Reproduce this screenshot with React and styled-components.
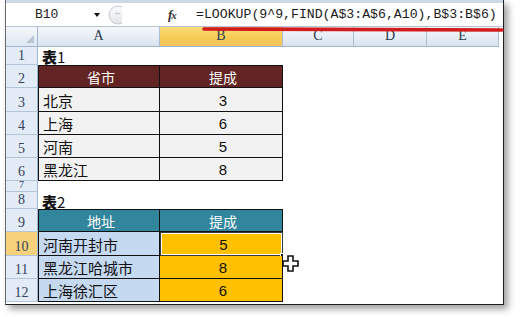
import React from 'react';
import styled, { createGlobalStyle, css } from 'styled-components';

// page reset
const GlobalStyle = createGlobalStyle`
  html, body {
    margin: 0;
    padding: 0;
    background: #ffffff;
  }
  * { box-sizing: border-box; }
`;

const Page = styled.div`
  width: 530px;
  height: 317px;
  overflow: hidden;
  background: #fff;
  padding-left: 5px;
`;

// the excel window with its drop shadow
const Frame = styled.div`
  position: relative;
  width: 499px;
  height: 305px;
  background: #fff;
  border-left: 1px solid #6b6b6b;
  border-right: 1px solid #1e1e1e;
  border-bottom: 1px solid #1e1e1e;
  box-shadow: 4px 4px 7px rgba(0, 0, 0, 0.38);
  display: flex;
  flex-direction: column;
`;

const TopStrip = styled.div`
  height: 3px;
  background: #cdd9e7;
`;

const FormulaBar = styled.div`
  height: 24px;
  display: flex;
  align-items: center;
  background: #fff;
  border-bottom: 1px solid #b5c3d3;
`;

const NameBox = styled.div`
  width: 88px;
  padding-left: 29px;
  font-family: "Liberation Mono", "DejaVu Sans Mono", monospace;
  font-size: 13px;
  color: #222;
`;

const DropArrow = styled.div`
  width: 0;
  height: 0;
  border-left: 3px solid transparent;
  border-right: 3px solid transparent;
  border-top: 4px solid #111;
  margin-top: 1px;
`;

const BallWrap = styled.div`
  margin-left: 8px;
  width: 14px;
  height: 20px;
  overflow: hidden;
`;

const FxLabel = styled.div`
  margin-left: 46px;
  width: 28px;
  font-family: "Liberation Serif", "DejaVu Serif", serif;
  font-style: italic;
  font-weight: bold;
  font-size: 13px;
  color: #333;
  letter-spacing: -1px;
  small { font-size: 11px; }
`;

const Formula = styled.div`
  font-family: "Liberation Mono", "DejaVu Sans Mono", monospace;
  font-size: 13.2px;
  color: #1a1a1a;
  white-space: nowrap;
`;

const Sheet = styled.div`
  display: grid;
  grid-template-columns: 32px 122px 123px 71px 73px 72px;
  grid-template-rows: 20px 18px 23px 24px 23px 23px 23px 11px 17px 23px 24px 23px 23px;
`;

const Corner = styled.div`
  position: relative;
  background: linear-gradient(#f4f7fb, #dde6f0);
  border-right: 1px solid #9eb6ce;
  border-bottom: 1px solid #9eb6ce;
  &::after {
    content: '';
    position: absolute;
    right: 3px;
    bottom: 3px;
    width: 0;
    height: 0;
    border-left: 8px solid transparent;
    border-bottom: 8px solid #b9c6d5;
  }
`;

const ColHead = styled.div`
  display: flex;
  align-items: flex-end;
  justify-content: center;
  padding-bottom: 2px;
  font-family: "Liberation Serif", "DejaVu Serif", serif;
  font-size: 14px;
  color: #2a3a4e;
  border-right: 1px solid #a9bed3;
  border-bottom: 1px solid #9eb6ce;
  background: ${p => (p.$active
    ? 'linear-gradient(#fbdc78, #f7cc55 55%, #f3c45e)'
    : 'linear-gradient(#f5f8fc, #dae3ee)')};
`;

const RowHead = styled.div`
  display: flex;
  align-items: flex-end;
  justify-content: center;
  padding-bottom: 1px;
  font-family: "Liberation Serif", "DejaVu Serif", serif;
  font-size: ${p => (p.$short ? '10px' : '14px')};
  line-height: 1;
  color: #33425a;
  overflow: hidden;
  border-right: 1px solid #9eb6ce;
  border-bottom: 1px solid #b2c4d8;
  background: ${p => (p.$active ? '#f8d27a' : '#e3ebf6')};
`;

const Cell = styled.div`
  position: relative;
  display: flex;
  align-items: center;
  justify-content: ${p => (p.$align === 'center' ? 'center' : 'flex-start')};
  padding-left: 4px;
  padding-top: 1px;
  font-family: ${p => (p.$num
    ? '"Liberation Sans", Arial, sans-serif'
    : '"Noto Sans CJK SC", "Noto Sans", sans-serif')};
  font-size: ${p => (p.$head ? '14px' : '15px')};
  line-height: 1;
  color: ${p => p.$color || '#111'};
  background: ${p => p.$bg || '#fff'};
  white-space: nowrap;
  ${p => p.$table && css`
    border-right: 1px solid #111;
    border-bottom: 1px solid #111;
  `}
  ${p => p.$first && css`border-left: 1px solid #111;`}
  ${p => p.$top && css`border-top: 1px solid #111;`}
  ${p => p.$selected && css`
    border: 1px solid #3a3a3a;
    box-shadow: inset 0 0 0 1px #fff;
  `}
`;

const Title = styled.span`
  font-family: "Noto Sans CJK SC", sans-serif;
  font-size: 15px;
  b { font-weight: 900; }
`;

const FillHandle = styled.div`
  position: absolute;
  right: -3px;
  bottom: -3px;
  width: 5px;
  height: 5px;
  background: #111;
  border: 1px solid #fff;
`;

const RedMark = styled.svg`
  position: absolute;
  left: 194px;
  top: 26px;
`;

const Cursor = styled.svg`
  position: absolute;
  left: 276px;
  top: 255px;
`;

const table1 = [
  ['北京', '3'],
  ['上海', '6'],
  ['河南', '5'],
  ['黑龙江', '8'],
];

const table2 = [
  ['河南开封市', '5'],
  ['黑龙江哈城市', '8'],
  ['上海徐汇区', '6'],
];

const Blank = ({ n }) => Array.from({ length: n }).map((_, i) => <Cell key={i} />);

const App = () => {
  const rows = [];

  rows.push(
    <React.Fragment key="r1">
      <RowHead>1</RowHead>
      <Cell><Title><b>表</b>1</Title></Cell>
      <Blank n={4} />
    </React.Fragment>
  );

  rows.push(
    <React.Fragment key="r2">
      <RowHead>2</RowHead>
      <Cell $table $first $top $head $align="center" $bg="#632523" $color="#fff">省市</Cell>
      <Cell $table $top $head $align="center" $bg="#632523" $color="#fff">提成</Cell>
      <Blank n={3} />
    </React.Fragment>
  );

  table1.forEach(([city, v], i) => {
    rows.push(
      <React.Fragment key={'t1' + i}>
        <RowHead>{i + 3}</RowHead>
        <Cell $table $first $bg="#f2f2f2">{city}</Cell>
        <Cell $table $num $align="center" $bg="#f2f2f2">{v}</Cell>
        <Blank n={3} />
      </React.Fragment>
    );
  });

  rows.push(
    <React.Fragment key="r7">
      <RowHead $short>7</RowHead>
      <Blank n={5} />
    </React.Fragment>
  );

  rows.push(
    <React.Fragment key="r8">
      <RowHead>8</RowHead>
      <Cell><Title><b>表</b>2</Title></Cell>
      <Blank n={4} />
    </React.Fragment>
  );

  rows.push(
    <React.Fragment key="r9">
      <RowHead>9</RowHead>
      <Cell $table $first $top $head $align="center" $bg="#31859c" $color="#fff">地址</Cell>
      <Cell $table $top $head $align="center" $bg="#31859c" $color="#fff">提成</Cell>
      <Blank n={3} />
    </React.Fragment>
  );

  table2.forEach(([addr, v], i) => {
    rows.push(
      <React.Fragment key={'t2' + i}>
        <RowHead $active={i === 0}>{i + 10}</RowHead>
        <Cell $table $first $bg="#c5d9f1">{addr}</Cell>
        <Cell $table $num $align="center" $bg="#ffc000" $selected={i === 0}>
          {v}
          {i === 0 && <FillHandle />}
        </Cell>
        <Blank n={3} />
      </React.Fragment>
    );
  });

  return (
    <Page>
      <GlobalStyle />
      <Frame>
        <TopStrip />
        <FormulaBar>
          <NameBox>B10</NameBox>
          <DropArrow />
          <BallWrap>
            <svg width="20" height="20" viewBox="0 0 20 20">
              <defs>
                <linearGradient id="ball" x1="0" y1="0" x2="0" y2="1">
                  <stop offset="0" stopColor="#fbfbfb" />
                  <stop offset="1" stopColor="#e2e5e9" />
                </linearGradient>
              </defs>
              <circle cx="10" cy="10" r="9" fill="url(#ball)" stroke="#c3c8cf" />
              <path d="M7 8.5 h5" stroke="#c8ccd2" strokeWidth="1.4" />
            </svg>
          </BallWrap>
          <FxLabel>f<small>x</small></FxLabel>
          <Formula>=LOOKUP(9^9,FIND(A$3:A$6,A10),B$3:B$6)</Formula>
        </FormulaBar>
        <Sheet>
          <Corner />
          <ColHead>A</ColHead>
          <ColHead $active>B</ColHead>
          <ColHead>C</ColHead>
          <ColHead>D</ColHead>
          <ColHead>E</ColHead>
          {rows}
        </Sheet>
        <RedMark width="310" height="8" viewBox="0 0 310 8">
          <path d="M4 3 Q150 3.5 302 4" stroke="#d31b1b" strokeWidth="3.6" strokeLinecap="round" fill="none" />
        </RedMark>
        <Cursor width="18" height="18" viewBox="0 0 18 18">
          <path d="M6 1 h5 v5 h5 v5 h-5 v5 h-5 v-5 h-5 v-5 h5 z" fill="#fff" stroke="#111" strokeWidth="1.6" />
        </Cursor>
      </Frame>
    </Page>
  );
};

export default App;
